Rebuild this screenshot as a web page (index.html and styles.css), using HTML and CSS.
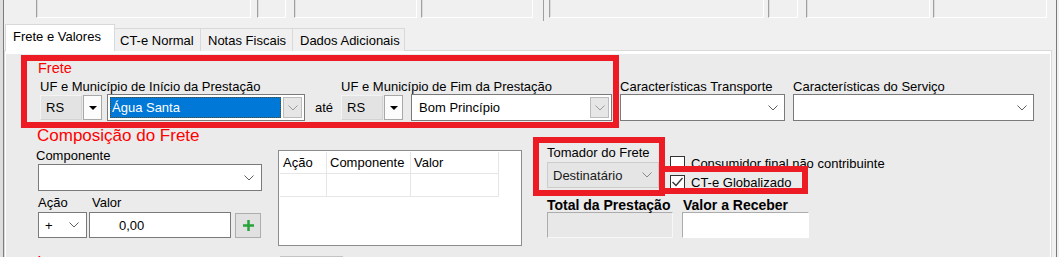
FILE: index.html
```html
<!DOCTYPE html>
<html lang="pt-BR">
<head>
<meta charset="utf-8">
<title>Frete e Valores</title>
<link rel="stylesheet" href="styles.css">
</head>
<body>
<div class="screen">
  <div class="edge-left"></div>
  <div class="win">
    <div class="topstrip">
      <div class="tb"></div>
      <div class="tb"></div>
      <div class="tb"></div>
      <div class="tb"></div>
      <div class="tb-div"></div>
      <div class="tb"></div>
      <div class="tb"></div>
      <div class="tb"></div>
      <div class="tb"></div>
    </div>
    <div class="tabs">
      <div class="tab active t1">Frete e Valores</div>
      <div class="tab t2">CT-e Normal</div>
      <div class="tab t3">Notas Fiscais</div>
      <div class="tab t4">Dados Adicionais</div>
    </div>
    <div class="tabframe">
      <div class="sheet">
        <div class="row1">
          <div class="frete">
            <div class="group-title">Frete</div>
            <div class="frete-fields">
              <div class="field uf-ini">
                <div class="lbl">UF e Município de Início da Prestação</div>
                <div class="ctl-row">
                  <div class="uf">RS</div>
                  <div class="uf-btn"><svg width="8" height="4" viewBox="0 0 8 4"><polygon points="0,0 8,0 4,4" fill="#000"/></svg></div>
                  <div class="combo edit focus w-agua">
                    <div class="sel"><span class="seltext">Água Santa</span></div>
                    <div class="dd"><svg class="chev" width="10" height="6" viewBox="0 0 10 6"><path d="M.5.5 5 5 9.5.5" fill="none" stroke="#9a9a9a"/></svg></div>
                  </div>
                </div>
              </div>
              <div class="ate">até</div>
              <div class="field uf-fim">
                <div class="lbl">UF e Município de Fim da Prestação</div>
                <div class="ctl-row">
                  <div class="uf">RS</div>
                  <div class="uf-btn"><svg width="8" height="4" viewBox="0 0 8 4"><polygon points="0,0 8,0 4,4" fill="#000"/></svg></div>
                  <div class="combo edit w-bom">
                    <div class="sel">Bom Princípio</div>
                    <div class="dd"><svg class="chev" width="10" height="6" viewBox="0 0 10 6"><path d="M.5.5 5 5 9.5.5" fill="none" stroke="#9a9a9a"/></svg></div>
                  </div>
                </div>
              </div>
            </div>
          </div>
          <div class="field char1">
            <div class="lbl">Características Transporte</div>
            <div class="combo"><span></span><svg class="chev" width="10" height="6" viewBox="0 0 10 6"><path d="M.5.5 5 5 9.5.5" fill="none" stroke="#5f5f5f"/></svg></div>
          </div>
          <div class="field char2">
            <div class="lbl">Características do Serviço</div>
            <div class="combo"><span></span><svg class="chev" width="10" height="6" viewBox="0 0 10 6"><path d="M.5.5 5 5 9.5.5" fill="none" stroke="#5f5f5f"/></svg></div>
          </div>
        </div>

        <div class="row2">
          <div class="colA">
            <div class="group-title big">Composição do Frete</div>
            <div class="lbl comp-lbl">Componente</div>
            <div class="combo comp"><span></span><svg class="chev" width="10" height="6" viewBox="0 0 10 6"><path d="M.5.5 5 5 9.5.5" fill="none" stroke="#5f5f5f"/></svg></div>
            <div class="lbl-row">
              <div class="lbl acao-lbl">Ação</div>
              <div class="lbl">Valor</div>
            </div>
            <div class="val-row">
              <div class="combo acao"><span>+</span><svg class="chev" width="10" height="6" viewBox="0 0 10 6"><path d="M.5.5 5 5 9.5.5" fill="none" stroke="#5f5f5f"/></svg></div>
              <div class="editbox valor">0,00</div>
              <div class="addbtn"><svg width="11" height="11" viewBox="0 0 11 11"><rect x="0" y="4.25" width="11" height="2.5" fill="#27a33a"/><rect x="4.25" y="0" width="2.5" height="11" fill="#27a33a"/></svg></div>
            </div>
          </div>

          <div class="grid-box">
            <div class="grid">
              <div class="gc">Ação</div>
              <div class="gc">Componente</div>
              <div class="gc">Valor</div>
              <div class="gc"></div>
              <div class="gc"></div>
              <div class="gc"></div>
            </div>
          </div>

          <div class="colC">
            <div class="c1">
              <div class="field tomador">
                <div class="lbl">Tomador do Frete</div>
                <div class="combo disabled"><span>Destinatário</span><svg class="chev" width="10" height="6" viewBox="0 0 10 6"><path d="M.5.5 5 5 9.5.5" fill="none" stroke="#8a8a8a"/></svg></div>
              </div>
              <div class="checks">
                <div class="cb"><span class="box"></span><span>Consumidor final não contribuinte</span></div>
                <div class="cb cb2"><span class="box"><svg width="13" height="13" viewBox="0 0 13 13"><polyline points="1.5,6 5,9.5 11.5,2" fill="none" stroke="#333" stroke-width="1.3"/></svg></span><span>CT-e Globalizado</span></div>
              </div>
            </div>
            <div class="tot">
              <div class="tf tf1">
                <div class="blbl">Total da Prestação</div>
                <div class="ro"></div>
              </div>
              <div class="tf tf2">
                <div class="blbl">Valor a Receber</div>
                <div class="ro white"></div>
              </div>
            </div>
          </div>
        </div>

        <div class="row3">
          <div class="group-title big r3title">Impostos</div>
          <div class="r3box"></div>
        </div>
      </div>
    </div>
  </div>
  <div class="edge-right"></div>

  <div class="mark m1"></div>
  <div class="mark m2"></div>
  <div class="mark m3"></div>
</div>
</body>
</html>
```

FILE: styles.css
```css
* { box-sizing: border-box; margin: 0; padding: 0; }
html, body { width: 1059px; height: 257px; overflow: hidden; }
body {
  font: 13px/15px "Liberation Sans", Arial, sans-serif;
  color: #000;
  background: #f0f0f0;
}
.screen { position: relative; display: flex; width: 1059px; height: 257px; overflow: hidden; }
.edge-left { flex: none; width: 4px; background: #dedede; border-right: 1px solid #7c7c7c; }
.edge-right { flex: none; width: 3px; background: #f0f0f0; border-left: 1px solid #7a7a7a; }
.win { flex: none; width: 1052px; display: flex; flex-direction: column; }

/* top strip */
.topstrip { flex: none; height: 24px; display: flex; align-items: flex-start; padding-left: 32px; }
.tb {
  height: 18px;
  border-left: 1px solid #a0a0a0;
  border-right: 1px solid #fff;
  border-bottom: 1px solid #fff;
  box-shadow: inset 1px 0 #dcdcdc;
}
.tb-div { width: 1px; height: 21px; background: #a0a0a0; margin-left: 10px; }
.topstrip > :nth-child(1) { width: 215px; }
.topstrip > :nth-child(2) { width: 29px; margin-left: 6px; }
.topstrip > :nth-child(3) { width: 123px; margin-left: 8px; }
.topstrip > :nth-child(4) { width: 112px; margin-left: 4px; }
.topstrip > :nth-child(6) { width: 215px; margin-left: 5px; }
.topstrip > :nth-child(7) { width: 30px; margin-left: 4px; }
.topstrip > :nth-child(8) { width: 124px; margin-left: 8px; }
.topstrip > :nth-child(9) { width: 114px; margin-left: 3px; }

/* tabs */
.tabs { flex: none; display: flex; align-items: flex-end; height: 27px; margin: 0 0 -1px 1px; position: relative; z-index: 1; }
.tab {
  height: 23px;
  border: 1px solid #d9d9d9;
  border-bottom: none;
  background: #f0f0f0;
  padding-top: 4px;
  white-space: nowrap;
  overflow: hidden;
}
.tab.active { height: 27px; background: #fff; }
.t1 { width: 110px; padding-left: 7px; }
.t2 { width: 87px; padding-left: 5px; margin-left: -1px; }
.t3 { width: 93px; padding-left: 7px; margin-left: -1px; }
.t4 { width: 113px; padding-left: 7px; margin-left: -1px; }

.tabframe {
  flex: 1;
  margin-right: 4px;
  border: 1px solid #d9d9d9;
  background: #fff;
  padding: 3px 1px 0 1px;
  display: flex;
  flex-direction: column;
}
.sheet { flex: 1; background: #ebebeb; }

/* generic */
.lbl { line-height: 15px; height: 15px; white-space: nowrap; }
.group-title { color: #f00; font-size: 14.5px; line-height: 16px; height: 16px; white-space: nowrap; }
.group-title.big { font-size: 17px; line-height: 18px; height: 18px; }
.chev { display: block; flex: none; }

.combo {
  height: 27px;
  border: 1px solid #7a7a7a;
  background: #fff;
  display: flex;
  align-items: center;
  justify-content: space-between;
  padding: 0 6px 0 5px;
}
.combo.edit { padding: 2px; align-items: stretch; gap: 2px; justify-content: flex-start; }
.combo.edit .sel { flex: 1; display: flex; align-items: center; padding-left: 5px; white-space: nowrap; }
.combo.focus .sel { background: #0078d7; color: #fff; padding-left: 2px; outline: 1px dotted #5a4a20; outline-offset: -1px; }
.dd { flex: none; width: 19px; background: #e6e6e6; border: 1px solid #bcbcbc; display: flex; align-items: center; justify-content: center; }
.combo.disabled { background: #e5e5e5; border-color: #cccccc; color: #1a1a1a; }

/* row 1 */
.row1 { display: flex; align-items: flex-end; margin-top: 6px; padding-left: 32px; }
.frete { display: flex; flex-direction: column; }
.frete-fields { display: flex; margin-top: 3px; }
.uf-ini { margin-left: 2px; }
.ctl-row { display: flex; align-items: center; height: 27px; }
.uf {
  width: 42px; height: 25px;
  background: #e3e3e3;
  border: 1px solid #d3d3d3;
  border-top-color: #f4f4f4; border-left-color: #f4f4f4;
  padding-left: 5px;
  display: flex; align-items: center;
}
.uf-btn {
  width: 19px; height: 25px; margin-left: 1px;
  background: #fcfcfc; border: 1px solid #a8a8a8;
  display: flex; align-items: center; justify-content: center;
}
.uf-ini .combo { margin-left: 5px; }
.uf-fim .combo { margin-left: 8px; }
.w-agua { width: 198px; }
.w-bom { width: 201px; }
.ate { align-self: flex-end; height: 27px; display: flex; align-items: center; padding: 0 8px 0 10px; }
.char1 { margin-left: 8px; width: 165px; }
.char2 { margin-left: 8px; width: 241px; }

/* row 2 */
.row2 { display: flex; align-items: flex-start; margin-top: 6px; padding-left: 30px; }
.colA { width: 226px; display: flex; flex-direction: column; }
.colA .big { margin-left: 1px; }
.comp-lbl { margin-top: 3px; }
.combo.comp { margin: 1px 0 0 2px; width: 224px; padding-right: 7px; }
.lbl-row { display: flex; margin: 4px 0 0 2px; }
.acao-lbl { width: 54px; }
.val-row { display: flex; align-items: flex-start; margin: 2px 0 0 2px; }
.combo.acao { width: 49px; height: 26px; padding: 0 7px 0 6px; }
.editbox { height: 26px; border: 1px solid #7a7a7a; background: #fff; display: flex; align-items: center; }
.valor { width: 142px; margin-left: 2px; padding-left: 29px; }
.addbtn {
  width: 26px; height: 25px; margin: 1px 0 0 4px;
  background: #e1e1e1; border: 1px solid #adadad;
  display: flex; align-items: center; justify-content: center;
}

.grid-box { width: 244px; height: 96px; margin: 23px 0 0 16px; border: 1px solid #8c8c8c; background: #fff; padding: 1px; }
.grid { display: grid; grid-template-columns: 47px 84px 88px; grid-template-rows: 22px 23px; }
.gc { border-right: 1px solid #e6e6e6; border-bottom: 1px solid #e6e6e6; padding-left: 3px; display: flex; align-items: center; white-space: nowrap; }

.colC { margin-left: 25px; display: flex; flex-direction: column; }
.c1 { display: flex; align-items: flex-start; }
.tomador { margin-top: 18px; width: 112px; }
.tomador .combo { margin-top: 2px; height: 26px; padding-left: 5px; }
.checks { margin: 29px 0 0 11px; display: flex; flex-direction: column; }
.cb { display: flex; align-items: center; height: 15px; white-space: nowrap; }
.cb2 { margin-top: 4px; }
.box { flex: none; width: 15px; height: 15px; border: 1px solid #333; background: #fff; margin-right: 6px; }
.box svg { display: block; }
.tot { display: flex; margin-top: 8px; }
.blbl { font-weight: bold; font-size: 14px; line-height: 14px; height: 14px; white-space: nowrap; }
.tf1 { width: 126px; }
.tf2 { width: 127px; margin-left: 9px; }
.tf2 .blbl { padding-left: 1px; }
.ro { height: 26px; border: 1px solid; border-color: #acacac #f7f7f7 #f7f7f7 #acacac; background: #e8e8e8; }
.ro.white { background: #fff; border-right-color: #fff; border-bottom-color: #fff; }

/* row 3 (cut off at the bottom edge, as in the reference) */
.row3 { display: flex; align-items: flex-start; margin-top: 8px; padding-left: 31px; }
.r3title { width: 243px; }
.r3box { width: 63px; height: 20px; margin-top: 2px; border: 1px solid #c4c4c4; background: #e6e6e6; }

/* red annotation overlays */
.mark { position: absolute; border: 6px solid #ed1c24; z-index: 5; }
.m1 { left: 21px; top: 55px; width: 598px; height: 73px; }
.m2 { left: 533px; top: 137px; width: 132px; height: 59px; }
.m3 { left: 659px; top: 166px; width: 149px; height: 28px; }
```
